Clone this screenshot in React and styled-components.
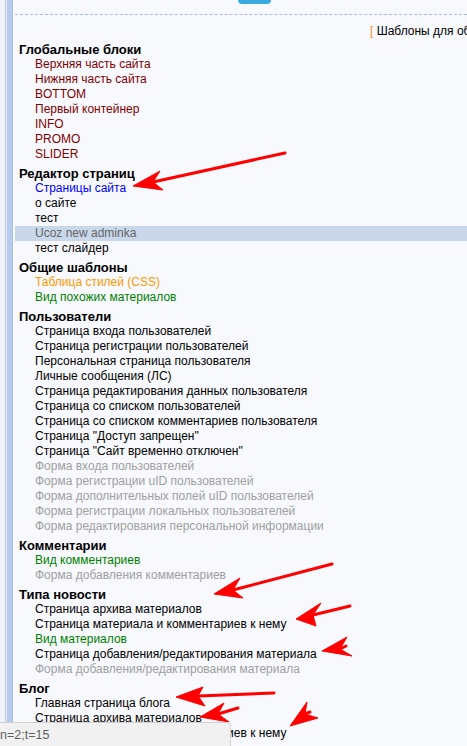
import React from "react";
import styled, { createGlobalStyle } from "styled-components";

const Global = createGlobalStyle`
  html, body { margin: 0; padding: 0; }
  body {
    background: #f7f9fd;
    font-family: "Liberation Sans", Arial, sans-serif;
    overflow: hidden;
    width: 467px;
    height: 746px;
  }
`;

const Page = styled.div`
  display: flex;
  min-height: 746px;
  position: relative;
`;

const RailOuter = styled.div`
  width: 5px;
  background: #eef2fa;
  border-right: 1px solid #c3cbd9;
  flex: none;
`;

const RailInner = styled.div`
  width: 5px;
  background: #b6cbee;
  border-left: 1px solid #e3eaf6;
  border-right: 1px solid #a9bfe6;
  flex: none;
`;

const Main = styled.div`
  flex: 1;
  min-width: 0;
  padding-left: 2px;
`;

const TopButton = styled.div`
  width: 33px;
  height: 4px;
  margin-left: 223px;
  background: #3aa9dc;
  border-radius: 0 0 5px 5px;
`;

const Panel = styled.div`
  margin-top: 10px;
  border-top: 1px dashed #a9bcf0;
`;

const TitleLine = styled.div`
  padding: 9px 0 0 355px;
  font-size: 12px;
  line-height: 14px;
  color: #000;
  white-space: nowrap;
  overflow: hidden;
`;

const Bracket = styled.span`
  color: #f39a1f;
`;

const Group = styled.div`
  margin-top: 4px;
`;

const GroupTitle = styled.div`
  padding-left: 4px;
  font-size: 13px;
  font-weight: bold;
  line-height: 15px;
  color: #000;
`;

const tones = {
  maroon: "#800000",
  blue: "#0000ff",
  black: "#000000",
  muted: "#666666",
  orange: "#ff9900",
  green: "#008000",
  grey: "#a0a0a0",
};

const Item = styled.div`
  padding-left: 20px;
  font-size: 12px;
  line-height: 15px;
  white-space: nowrap;
  color: ${(p) => tones[p.$tone] || "#000"};
  background: ${(p) => (p.$active ? "#c8d7ea" : "transparent")};
`;

const Overlay = styled.svg`
  position: absolute;
  left: 0;
  top: 0;
  pointer-events: none;
`;

const StatusBar = styled.div`
  position: fixed;
  left: 0;
  bottom: 0;
  width: 230px;
  height: 22px;
  background: #f1f1f1;
  border-top: 1px solid #d2d2d2;
  border-right: 1px solid #d2d2d2;
  border-top-right-radius: 4px;
  display: flex;
  align-items: center;
  font-family: "Liberation Sans", Arial, sans-serif;
  font-size: 12.5px;
  color: #5f5f5f;
  padding-top: 1px;
`;

const groups = [
  {
    title: "Глобальные блоки",
    items: [
      ["Верхняя часть сайта", "maroon"],
      ["Нижняя часть сайта", "maroon"],
      ["BOTTOM", "maroon"],
      ["Первый контейнер", "maroon"],
      ["INFO", "maroon"],
      ["PROMO", "maroon"],
      ["SLIDER", "maroon"],
    ],
  },
  {
    title: "Редактор страниц",
    items: [
      ["Страницы сайта", "blue"],
      ["о сайте", "black"],
      ["тест", "black"],
      ["Ucoz new adminka", "muted", true],
      ["тест слайдер", "black"],
    ],
  },
  {
    title: "Общие шаблоны",
    items: [
      ["Таблица стилей (CSS)", "orange"],
      ["Вид похожих материалов", "green"],
    ],
  },
  {
    title: "Пользователи",
    items: [
      ["Страница входа пользователей", "black"],
      ["Страница регистрации пользователей", "black"],
      ["Персональная страница пользователя", "black"],
      ["Личные сообщения (ЛС)", "black"],
      ["Страница редактирования данных пользователя", "black"],
      ["Страница со списком пользователей", "black"],
      ["Страница со списком комментариев пользователя", "black"],
      ["Страница \"Доступ запрещен\"", "black"],
      ["Страница \"Сайт временно отключен\"", "black"],
      ["Форма входа пользователей", "grey"],
      ["Форма регистрации uID пользователей", "grey"],
      ["Форма дополнительных полей uID пользователей", "grey"],
      ["Форма регистрации локальных пользователей", "grey"],
      ["Форма редактирования персональной информации", "grey"],
    ],
  },
  {
    title: "Комментарии",
    items: [
      ["Вид комментариев", "green"],
      ["Форма добавления комментариев", "grey"],
    ],
  },
  {
    title: "Типа новости",
    items: [
      ["Страница архива материалов", "black"],
      ["Страница материала и комментариев к нему", "black"],
      ["Вид материалов", "green"],
      ["Страница добавления/редактирования материала", "black"],
      ["Форма добавления/редактирования материала", "grey"],
    ],
  },
  {
    title: "Блог",
    items: [
      ["Главная страница блога", "black"],
      ["Страница архива материалов", "black"],
      ["Страница материала и комментариев к нему", "black"],
    ],
  },
];

const arrows = [
  { tail: [285, 153], tip: [133, 186], b1: [160, 171], b2: [163, 190], n: [153, 182] },
  { tail: [332, 564], tip: [214, 594], b1: [240, 578], b2: [243, 598], n: [233, 590] },
  { tail: [350, 606], tip: [296, 619], b1: [321, 603], b2: [316, 626], n: [313, 615] },
  { tail: [346, 646], tip: [322, 651], b1: [347, 637], b2: [352, 656], n: [340, 649] },
  { tail: [274, 693], tip: [176, 697], b1: [203, 687], b2: [205, 706], n: [198, 696] },
  { tail: [238, 708], tip: [200, 717], b1: [224, 703], b2: [229, 722], n: [218, 714] },
  { tail: [310, 712], tip: [290, 726], b1: [307, 702], b2: [318, 718], n: [305, 714] },
];

function Arrows() {
  return (
    <Overlay width="467" height="746" viewBox="0 0 467 746">
      {arrows.map((a, i) => (
        <g key={i} fill="#ff0000" stroke="#ff0000" strokeLinejoin="round">
          <path
            d={`M${a.tail[0]} ${a.tail[1]} L${a.n[0]} ${a.n[1]}`}
            strokeWidth="3"
            strokeLinecap="round"
            fill="none"
          />
          <polygon
            points={`${a.tip.join(",")} ${a.b1.join(",")} ${a.n.join(",")} ${a.b2.join(",")}`}
            strokeWidth="1"
          />
        </g>
      ))}
    </Overlay>
  );
}

export default function App() {
  return (
    <>
      <Global />
      <Page>
        <RailOuter />
        <RailInner />
        <Main>
          <TopButton />
          <Panel>
            <TitleLine>
              <Bracket>[</Bracket> Шаблоны для общих страниц сайта
            </TitleLine>
            {groups.map((g) => (
              <Group key={g.title}>
                <GroupTitle>{g.title}</GroupTitle>
                {g.items.map(([text, tone, active], i) => (
                  <Item key={i} $tone={tone} $active={active}>
                    {text}
                  </Item>
                ))}
              </Group>
            ))}
          </Panel>
        </Main>
        <Arrows />
      </Page>
      <StatusBar>n=2;t=15</StatusBar>
    </>
  );
}
